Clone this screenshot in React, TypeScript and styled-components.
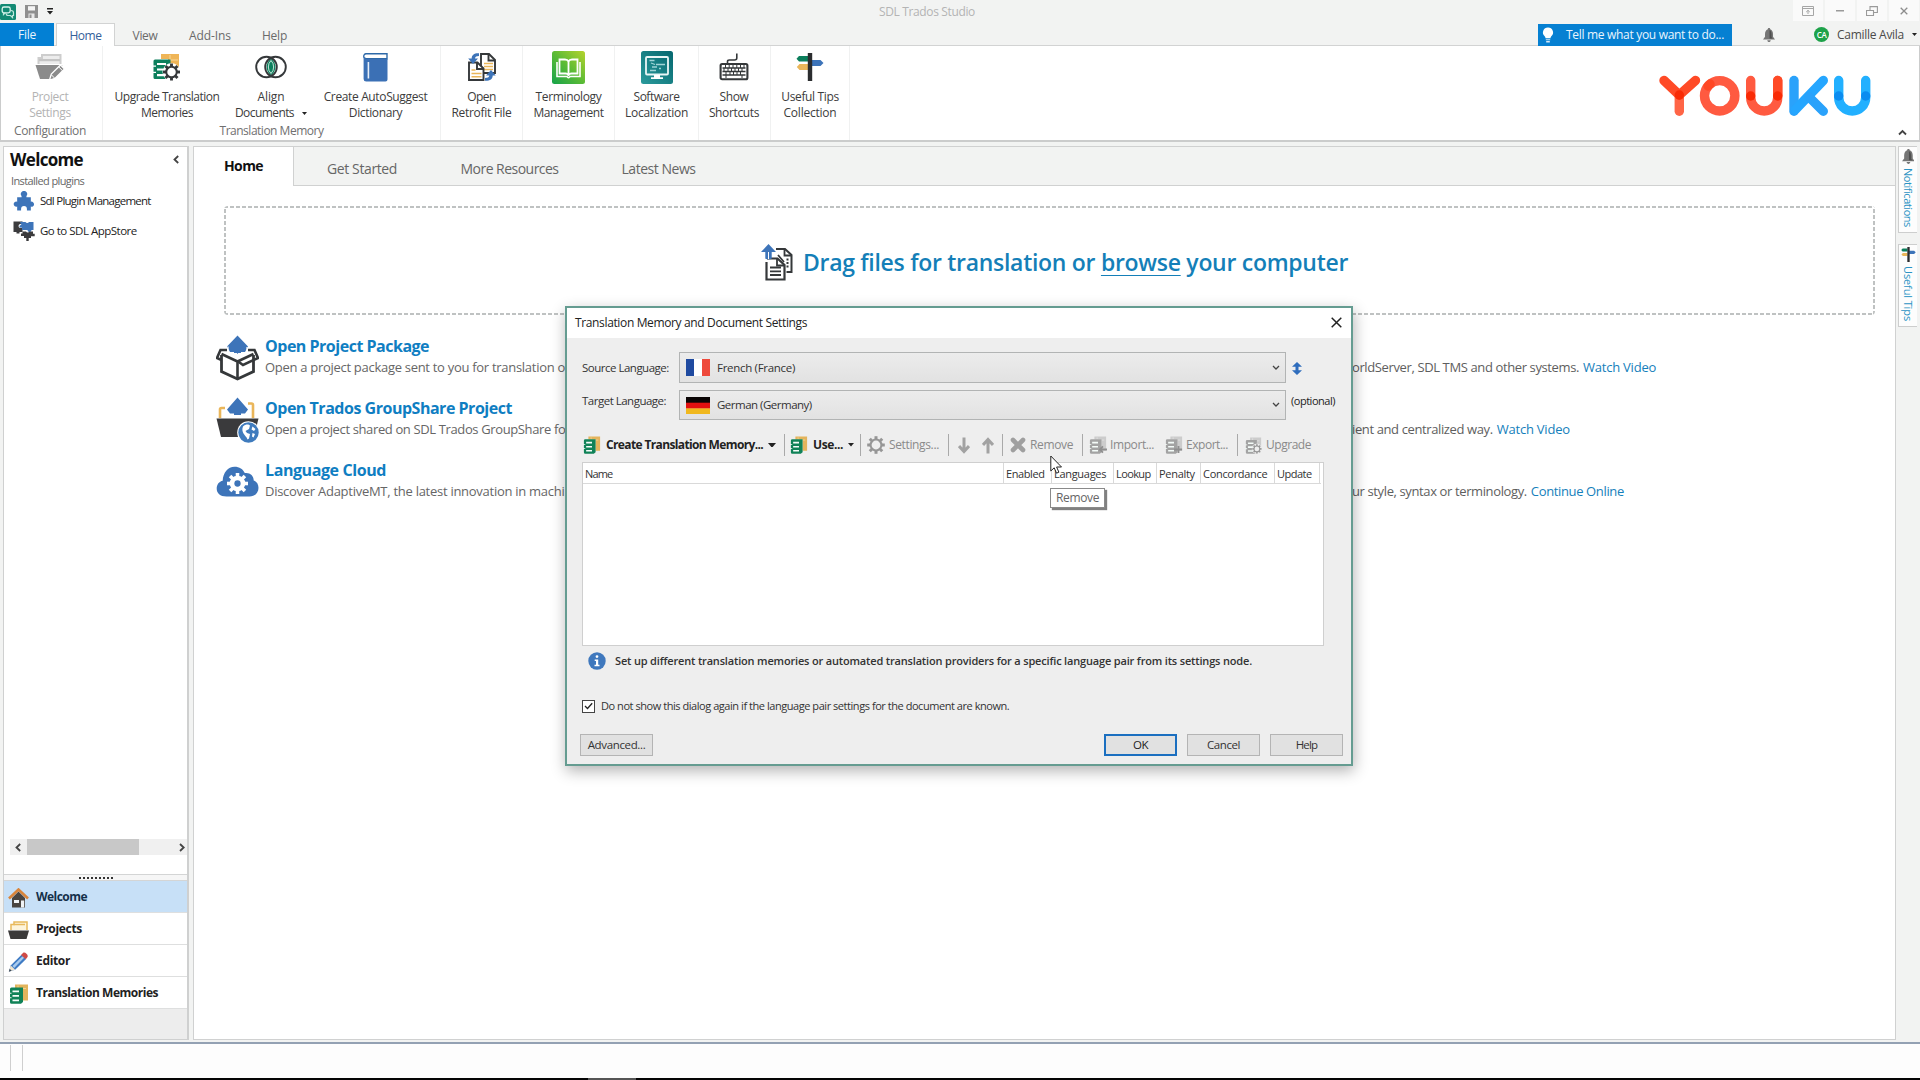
import React from 'react';
import styled, { createGlobalStyle, css } from 'styled-components';

const Global = createGlobalStyle`
  *, *::before, *::after { box-sizing: border-box; }
  html, body { margin: 0; padding: 0; background: #f2f3f2; }
  body { width: 1920px; height: 1080px; overflow: hidden; font-family: "Open Sans", "Noto Sans", sans-serif; font-size: 12px; color: #333; }
  svg { display: block; flex: none; }
`;

/* ---------- text ---------- */
const T = styled.span<{ $s?: number; $ls?: number; $w?: number; $c?: string; $lh?: number }>`
  font-size: ${p => p.$s ?? 12}px;
  letter-spacing: ${p => p.$ls ?? -0.36}px;
  font-weight: ${p => p.$w ?? 400};
  color: ${p => p.$c ?? '#3c3c3c'};
  line-height: ${p => p.$lh ?? 16}px;
  white-space: nowrap;
`;

/* ---------- frame ---------- */
const Screen = styled.div`
  position: relative;
  width: 1920px;
  height: 1080px;
  display: flex;
  flex-direction: column;
  background: #f2f3f2;
  overflow: hidden;
`;
const TitleBar = styled.header`
  display: grid;
  grid-template-columns: 840px 1fr 840px;
  height: 23px;
  flex: none;
`;
const QuickAccess = styled.div`
  display: flex;
  align-items: center;
  gap: 9px;
`;
const AppTitle = styled.div`
  display: flex;
  align-items: center;
  padding-left: 39px;
`;
const WindowButtons = styled.div`
  display: flex;
  justify-content: flex-end;
  gap: 2px;
  padding-right: 1px;
`;
const WindowButton = styled.div`
  width: 30px;
  height: 21px;
  display: flex;
  align-items: center;
  justify-content: center;
  background: #fafafa;
`;
const TabRow = styled.nav`
  display: flex;
  align-items: stretch;
  height: 23px;
  flex: none;
  box-shadow: inset 0 -1px #d2d3d3;
`;
const FileTab = styled.div`
  width: 54px;
  display: flex;
  align-items: center;
  justify-content: center;
  background: #0380d4;
`;
const RibbonTab = styled.div<{ $w: number; $active?: boolean }>`
  width: ${p => p.$w}px;
  display: flex;
  align-items: center;
  justify-content: center;
  padding-top: 2px;
  ${p => p.$active && css`
    margin-left: 2px;
    background: #fff;
    border: 1px solid #d2d3d3;
    border-bottom: 0;
  `}
`;
const TabRight = styled.div`
  margin-left: auto;
  display: flex;
  align-items: center;
`;
const TellMe = styled.div`
  width: 194px;
  height: 22px;
  margin-right: 31px;
  padding-left: 4px;
  display: flex;
  align-items: center;
  gap: 12px;
  background: #0680d2;
`;
const Avatar = styled.div`
  width: 15px;
  height: 15px;
  margin: 0 8px 0 39px;
  border-radius: 50%;
  background: #1ea24a;
  display: flex;
  align-items: center;
  justify-content: center;
`;
const UserMenu = styled.div`
  display: flex;
  align-items: center;
  gap: 8px;
  padding-right: 3px;
`;

/* ---------- ribbon ---------- */
const Ribbon = styled.section`
  position: relative;
  display: flex;
  height: 96px;
  flex: none;
  background: #fff;
  border: solid #cbcccc;
  border-width: 0 1px 2px 1px;
`;
const Group = styled.div<{ $w: number; $pr?: number }>`
  width: ${p => p.$w}px;
  display: flex;
  flex-direction: column;
  align-items: center;
  padding: 4px ${p => p.$pr ?? 0}px 0 0;
  border-right: 1px solid #f0f1f1;
`;
const GroupButtons = styled.div`
  display: flex;
  justify-content: center;
`;
const BigButton = styled.div<{ $w: number }>`
  width: ${p => p.$w}px;
  display: flex;
  flex-direction: column;
  align-items: center;
`;
const IconSlot = styled.div`
  height: 34px;
  margin-bottom: 5px;
  display: flex;
  align-items: center;
`;
const LabelLine = styled.div`
  display: flex;
  align-items: center;
  gap: 8px;
  height: 16px;
`;
const Caption = styled.div`
  height: 16px;
  margin-top: 2px;
  display: flex;
  align-items: center;
`;
const Watermark = styled.div`
  position: absolute;
  left: 1656px;
  top: 27px;
`;
const Collapse = styled.div`
  position: absolute;
  right: 12px;
  bottom: 4px;
`;

/* ---------- workspace ---------- */
const Workspace = styled.div`
  display: flex;
  height: 900px;
  padding: 4px 0 2px 3px;
  flex: none;
`;
const Sidebar = styled.aside`
  width: 186px;
  display: flex;
  flex-direction: column;
  background: #fff;
  border: 1px solid #cfd0d0;
  border-width: 1px 2px 1px 1px;
`;
const SideHead = styled.div`
  display: flex;
  align-items: center;
  justify-content: space-between;
  height: 25px;
  padding: 0 8px 0 6px;
`;
const SideCaption = styled.div`
  height: 18px;
  padding-left: 7px;
  display: flex;
  align-items: center;
`;
const PluginRow = styled.div`
  height: 22px;
  margin-bottom: 8px;
  padding-left: 9px;
  display: flex;
  align-items: center;
  gap: 5px;
`;
const HScroll = styled.div`
  display: flex;
  align-items: center;
  justify-content: space-between;
  height: 16px;
  margin: auto 0 19px 6px;
  padding: 0 2px 0 5px;
  background: #f0f0f0;
`;
const Thumb = styled.div`
  width: 112px;
  height: 16px;
  margin: 0 auto 0 6px;
  background: #c8c8c8;
`;
const Splitter = styled.div`
  height: 7px;
  border: 1px solid #d4d5d5;
  border-width: 1px 0;
  background: #f6f6f6;
  display: flex;
  justify-content: center;
  align-items: center;
  gap: 2px;
`;
const Dot = styled.i`
  width: 2px;
  height: 2px;
  background: #333;
`;
const NavItem = styled.div<{ $active?: boolean }>`
  height: 32px;
  padding-left: 4px;
  display: flex;
  align-items: center;
  gap: 7px;
  background: ${p => (p.$active ? '#c7e0f7' : '#fff')};
  border-bottom: 1px solid #dedfdf;
`;
const NavIcon = styled.div`
  width: 21px;
  display: flex;
  justify-content: center;
  padding-top: 3px;
`;
const NavFoot = styled.div`
  height: 30px;
  background: #ededed;
`;
const Main = styled.main`
  width: 1703px;
  margin-left: 4px;
  display: flex;
  flex-direction: column;
  background: #fff;
  border: 1px solid #d0d1d1;
`;
const PageTabs = styled.div`
  display: flex;
  height: 39px;
  flex: none;
`;
const PageTab = styled.div<{ $w: number; $active?: boolean }>`
  width: ${p => p.$w}px;
  display: flex;
  align-items: center;
  justify-content: center;
  padding: ${p => (p.$active ? '0 0 2px' : '6px 0 0')};
  background: ${p => (p.$active ? '#fff' : '#f2f3f2')};
  border-right: ${p => (p.$active ? '1px solid #d0d1d1' : '0')};
  border-bottom: ${p => (p.$active ? '0' : '1px solid #d0d1d1')};
`;
const TabFill = styled.div`
  flex: 1;
  background: #f2f3f2;
  border-bottom: 1px solid #d0d1d1;
`;
const DropZone = styled.div`
  height: 109px;
  margin: 20px 20px 0 30px;
  flex: none;
  display: flex;
  align-items: center;
  justify-content: center;
  gap: 9px;
  padding: 3px 0 0 10px;
  border-radius: 4px;
  background:
    repeating-linear-gradient(90deg, #bfc2c2 0 4px, transparent 4px 6px) 0 0 / 100% 2px no-repeat,
    repeating-linear-gradient(90deg, #bfc2c2 0 4px, transparent 4px 6px) 0 100% / 100% 2px no-repeat,
    repeating-linear-gradient(0deg, #bfc2c2 0 4px, transparent 4px 6px) 0 0 / 2px 100% no-repeat,
    repeating-linear-gradient(0deg, #bfc2c2 0 4px, transparent 4px 6px) 100% 0 / 2px 100% no-repeat;
`;
const Browse = styled.u`
  text-decoration-thickness: 1px;
  text-underline-offset: 4px;
`;
const Offers = styled.div`
  display: flex;
  flex-direction: column;
  padding: 20px 0 0 21px;
`;
const Offer = styled.div`
  display: grid;
  grid-template-columns: 50px 1087px 1fr;
  height: 62px;
`;
const OfferText = styled.div`
  display: flex;
  flex-direction: column;
`;
const OfferMore = styled.div`
  padding-top: 22px;
  display: flex;
  gap: 4px;
`;
const OfferIcon = styled.div<{ $pt?: number }>`
  padding: ${p => p.$pt ?? 0}px 0 0 1px;
`;
const Rail = styled.div`
  display: flex;
  flex-direction: column;
  gap: 11px;
  padding-left: 2px;
`;
const RailTab = styled.div<{ $h: number }>`
  width: 19px;
  height: ${p => p.$h}px;
  padding-top: 2px;
  display: flex;
  flex-direction: column;
  align-items: center;
  gap: 4px;
  background: #fdfdfd;
  border: 1px solid #cdcece;
  border-right: 0;
`;
const Vertical = styled(T)`
  writing-mode: vertical-rl;
`;
const StatusBar = styled.footer`
  height: 36px;
  display: flex;
  gap: 11px;
  padding: 1px 0 0 10px;
  background: #fdfdfd;
  border-top: 2px solid #93a1b3;
`;
const Notch = styled.i`
  width: 1px;
  height: 26px;
  background: #cfcfcf;
`;
const ScreenEdge = styled.div`
  height: 2px;
  background: linear-gradient(90deg, #050505 588px, #555 588px 636px, #050505 636px);
`;

/* ---------- dialog ---------- */
const Dialog = styled.div`
  position: absolute;
  left: 565px;
  top: 306px;
  width: 788px;
  height: 460px;
  display: flex;
  flex-direction: column;
  background: #eeeeee;
  border: 2px solid #659c91;
  box-shadow: 1px 5px 14px rgba(0, 0, 0, 0.3);
`;
const DialogTitle = styled.div`
  height: 30px;
  flex: none;
  padding: 0 9px 0 8px;
  display: flex;
  align-items: center;
  justify-content: space-between;
  background: #fff;
  & > svg { margin-bottom: 2px; }
`;
const DialogBody = styled.div`
  display: flex;
  flex-direction: column;
  padding: 14px 8px 0 15px;
`;
const FormRow = styled.div<{ $h: number; $mt?: number }>`
  display: grid;
  grid-template-columns: 97px 607px 1fr;
  height: ${p => p.$h}px;
  margin-top: ${p => p.$mt ?? 0}px;
`;
const FormLabel = styled.div<{ $pb?: number; $pl?: number; $pt?: number }>`
  display: flex;
  align-items: center;
  padding: ${p => p.$pt ?? 0}px 0 ${p => p.$pb ?? 0}px ${p => p.$pl ?? 0}px;
`;
const Combo = styled.div`
  display: flex;
  align-items: center;
  gap: 7px;
  padding: 0 5px 0 6px;
  background: linear-gradient(#ececec, #e2e2e2);
  border: 1px solid #b2b4b4;
  & > svg:last-child { margin-left: auto; }
`;
const ToolBar = styled.div`
  display: flex;
  height: 22px;
  margin-top: 14px;
  padding-left: 1px;
`;
const Tool = styled.div<{ $w: number; $pl?: number; $gap?: number; $sep?: boolean }>`
  width: ${p => p.$w}px;
  padding-left: ${p => p.$pl ?? 7}px;
  display: flex;
  align-items: center;
  gap: ${p => p.$gap ?? 5}px;
  border-right: ${p => (p.$sep ? '1px solid #a9a9a9' : '0')};
`;
const Table = styled.div`
  width: 742px;
  height: 184px;
  margin-top: 6px;
  background: #fff;
  border: 1px solid #cfcfcf;
`;
const HeadRow = styled.div`
  display: flex;
  height: 21px;
  width: 738px;
  border-bottom: 1px solid #d9d9d9;
`;
const HeadCell = styled.div<{ $w: number }>`
  width: ${p => p.$w}px;
  padding: 1px 0 0 2px;
  display: flex;
  align-items: center;
  border-right: 1px solid #d9d9d9;
`;
const InfoRow = styled.div`
  height: 18px;
  margin-top: 6px;
  padding-left: 6px;
  display: flex;
  align-items: center;
  gap: 9px;
`;
const CheckRow = styled.div`
  height: 16px;
  margin-top: 28px;
  display: flex;
  align-items: center;
  gap: 6px;
`;
const CheckBox = styled.div`
  width: 13px;
  height: 13px;
  display: flex;
  align-items: center;
  justify-content: center;
  background: #fff;
  border: 1px solid #444;
`;
const ButtonRow = styled.div`
  display: flex;
  gap: 10px;
  margin: 20px 0 0 -2px;
`;
const Button = styled.div<{ $w: number; $primary?: boolean; $push?: boolean }>`
  width: ${p => p.$w}px;
  height: 22px;
  display: flex;
  align-items: center;
  justify-content: center;
  background: #e1e1e1;
  border: ${p => (p.$primary ? '2px solid #1b6fc0' : '1px solid #b4b4b4')};
  margin-left: ${p => (p.$push ? 'auto' : '0')};
`;
const Tooltip = styled.div`
  position: absolute;
  left: 1050px;
  top: 488px;
  width: 55px;
  height: 20px;
  display: flex;
  align-items: center;
  justify-content: center;
  background: #fff;
  border: 1px solid #8a8a8a;
  box-shadow: 2px 2px 1px rgba(60, 60, 60, 0.65);
`;
const Pointer = styled.div`
  position: absolute;
  left: 1050px;
  top: 455px;
`;

/* ---------- icons ---------- */
const DARK = '#35383a';
const BLUE = '#3d74b9';
const GREEN = '#0c7f5c';
const GOLD = '#eab65a';

const Caret = ({ w = 6, c = '#222' }: { w?: number; c?: string }) => (
  <svg width={w} height={w * 0.6} viewBox="0 0 10 6"><path d="M0 0h10L5 6z" fill={c} /></svg>
);
const AppLogo = () => (
  <svg width="16" height="16" viewBox="0 0 16 16">
    <rect width="16" height="16" rx="1.5" fill="#138a74" />
    <rect x="2.200" y="3" width="8" height="5.800" rx="1.800" fill="none" stroke="#d9f4ec" strokeWidth="1.300" />
    <path d="M3.500 8.500v2l2-2M11 6.500c1.500 0 2.500.6 2.500 2.200v2.800h-1v2l-2-2H8c-1.200 0-1.700-.8-1.700-2" fill="none" stroke="#bfe8dc" strokeWidth="1.200" />
  </svg>
);
const SaveIcon = () => (
  <svg width="13" height="13" viewBox="0 0 13 13">
    <path d="M0 0h13v13H0z" fill="#8f8f8f" />
    <path d="M3 1.200h7v4.300H3z" fill="#f4f4f4" /><path d="M3.500 8.500h6V13h-6z" fill="#e8e8e8" /><path d="M4.500 9.500h2V13h-2z" fill="#8f8f8f" />
  </svg>
);
const MoreIcon = () => (
  <svg width="6" height="7" viewBox="0 0 6 7"><path d="M0 0h6v1.500H0zM0 3h6L3 6.500z" fill="#222" /></svg>
);
const RestoreRibbon = () => (
  <svg width="12" height="10" viewBox="0 0 12 10" fill="none" stroke="#a6a6a6" strokeWidth="1">
    <path d="M.5.5h11v9H.5zM.5 2.500h11M6 8V4.500M4.200 6L6 4.300 7.800 6" />
  </svg>
);
const MinIcon = () => <svg width="8" height="2" viewBox="0 0 8 2"><path d="M0 0h8v1.500H0z" fill="#9a9a9a" /></svg>;
const RestoreIcon = () => (
  <svg width="12" height="10" viewBox="0 0 12 10" fill="none" stroke="#9a9a9a" strokeWidth="1.100">
    <path d="M.5 4.500h7v5h-7zM4 4.500V.6h7.400V6.500H7.500" />
  </svg>
);
const CloseIcon = ({ s = 8, c = '#8d8d8d', w = 1.300 }: { s?: number; c?: string; w?: number }) => (
  <svg width={s} height={s} viewBox={`0 0 ${s} ${s}`}>
    <path d={`M.7.7L${s - 0.7} ${s - 0.7}M${s - 0.7} .7L.7 ${s - 0.7}`} stroke={c} strokeWidth={w} />
  </svg>
);
const RemoveIcon = () => (
  <svg width="16" height="16" viewBox="0 0 16 16">
    <path d="M3 3l10 10M13 3L3 13" stroke="#9f9f9f" strokeWidth="4.600" strokeLinecap="round" />
  </svg>
);
const BulbIcon = () => (
  <svg width="12" height="16" viewBox="0 0 12 16">
    <path d="M6 .5a5 5 0 0 1 3.300 8.800c-.6.6-.8 1.200-.8 2H3.500c0-.8-.2-1.400-.8-2A5 5 0 0 1 6 .5z" fill="#fff" />
    <path d="M3.800 12.300h4.400v1H3.800zM4.200 14h3.600v1.500H4.200z" fill="#d8e9f7" />
  </svg>
);
const BellIcon = ({ s = 14 }: { s?: number }) => (
  <svg width={s * 0.86} height={s} viewBox="0 0 12 14">
    <path d="M6 0c.8 0 1.200.5 1.200 1.200C9.200 1.900 10 4 10 6v2.800L12 11.500H0L2 8.800V6c0-2 .8-4.100 2.800-4.800C4.800.5 5.200 0 6 0z" fill="#757575" />
    <path d="M4.300 12.200h3.400c0 1-.8 1.800-1.700 1.800s-1.700-.8-1.700-1.800z" fill="#757575" />
    <path d="M6.500 2c1.800.7 2 3 2 5v2l1 1.500h-3z" fill="#4f4f4f" />
  </svg>
);
const Chevron = ({ d, w, h, c = '#444', sw = 1.800 }: { d: string; w: number; h: number; c?: string; sw?: number }) => (
  <svg width={w} height={h} viewBox={`0 0 ${w} ${h}`}><path d={d} fill="none" stroke={c} strokeWidth={sw} /></svg>
);
const LEFT = 'M5.200 1L1.500 4.500 5.200 8';
const RIGHT = 'M1 1l3.700 3.500L1 8';

const ProjectSettingsIcon = () => (
  <svg width="30" height="28" viewBox="0 0 30 28">
    <path d="M3.500 11V5H7V2h18.500v9" fill="#ececec" stroke="#cdcdcd" strokeWidth="2" />
    <path d="M4 6h21v2.200H4z" fill="#c4c4c4" />
    <path d="M.5 12h27l-2.500 4-8 10H5z" fill="#8b8b8b" />
    <path d="M14.500 27l1.800-6L25.500 12l4 4-9.300 9.300z" fill="#8b8b8b" stroke="#fff" strokeWidth="1.300" />
    <path d="M23.800 14l3.700 3.700M16.500 22l3 3" stroke="#fff" />
  </svg>
);
const Cog = ({ x, y, r, c, hole = '#fff', ring = 0.5 }: { x: number; y: number; r: number; c: string; hole?: string; ring?: number }) => (
  <g transform={`translate(${x} ${y})`}>
    {[0, 45, 90, 135].map(a => (
      <rect key={a} x={-r * 0.17} y={-r} width={r * 0.34} height={r * 2} fill={c} transform={`rotate(${a})`} />
    ))}
    <circle r={r * 0.74} fill={c} /><circle r={r * ring} fill={hole} />
  </g>
);
const UpgradeIcon = () => (
  <svg width="28" height="28" viewBox="0 0 28 28">
    <path d="M8 1h18v17H15V6H8z" fill="#efb557" /><path d="M17 2v5h8" fill="none" stroke="#f8d79b" />
    <path d="M2 6.500h15.500v17.500l-3 2H2a1.500 1.500 0 0 1-1.500-1.500V8A1.500 1.500 0 0 1 2 6.500z" fill={GREEN} />
    <path d="M4 10h9v2H4zM4 15.500h6v2H4zM4 21h7v2.200H4zM0 12.500h3v1.300H0zM0 18.700h3V20H0z" fill="#fff" />
    <circle cx="18.500" cy="19" r="9" fill="#fff" />
    <Cog x={18.500} y={19} r={8.500} c={DARK} />
  </svg>
);
const AlignIcon = () => (
  <svg width="32" height="24" viewBox="0 0 32 24">
    <path d="M16 3.800a9.800 9.800 0 0 1 0 16.400 9.800 9.800 0 0 1 0-16.400z" fill={GREEN} />
    <g fill="none" stroke={DARK} strokeWidth="1.900"><circle cx="11.500" cy="12" r="10.300" /><circle cx="20.500" cy="12" r="10.300" /></g>
    <path d="M16 5.500a9.300 9.300 0 0 1 0 13 9.300 9.300 0 0 1 0-13z" fill="none" stroke="#d8efe6" strokeWidth=".9" />
  </svg>
);
const BookIcon = () => (
  <svg width="25" height="29" viewBox="0 0 25 29">
    <path d="M3 .7h21v5H3.500a2.300 2.300 0 0 1-.5-5z" fill="#fff" stroke="#2d69a8" strokeWidth="1.400" />
    <path d="M.6 3.500A3 3 0 0 0 3.500 6H24.500v20.500a2 2 0 0 1-2 2H3.200A2.600 2.600 0 0 1 .6 26z" fill="#3b70b5" />
    <path d="M4.600 9h1.600v16.500H4.600z" fill="#e6eef8" />
  </svg>
);
const RetrofitIcon = () => (
  <svg width="30" height="30" viewBox="0 0 30 30">
    <path d="M14 2h8l6 6v13H14z" fill="#fff" stroke={DARK} strokeWidth="1.900" />
    <path d="M21.500 2v6.500H28" fill="none" stroke={DARK} strokeWidth="1.900" />
    <path d="M17 11.500h9M17 14.500h9M17 17.500h9" stroke={GOLD} strokeWidth="1.300" />
    <path d="M2 10.500h8.500l6 6V28H2z" fill="#fff" stroke={DARK} strokeWidth="1.900" />
    <path d="M10 10.500V17h6.500" fill="none" stroke={DARK} strokeWidth="1.900" />
    <path d="M4.500 18h4M4.500 21.500h10M4.500 24.800h10" stroke={GOLD} strokeWidth="1.400" />
    <path d="M12 1.200C7 1 4.700 3 4.700 6.500H1.200L6 12l5-5.500H8C8 4.800 9.500 4 12 4z" fill={BLUE} />
    <path d="M18 28.800c5 .2 7.700-1.800 7.700-5.300h3L24 18l-5 5.500h3.300c0 1.700-1.800 2.500-4.300 2.500z" fill={BLUE} />
  </svg>
);
const TermIcon = () => (
  <svg width="33" height="33" viewBox="0 0 33 33">
    <defs><linearGradient id="term" x1="1" y1="0" x2="0" y2="1"><stop offset="0" stopColor="#b5d32c" /><stop offset=".5" stopColor="#5cbb35" /><stop offset="1" stopColor="#16a34a" /></linearGradient></defs>
    <rect width="33" height="33" rx="2.500" fill="url(#term)" />
    <path d="M16.500 10.500v14.500M16.500 10.500C15.800 9 14.500 8.500 13 8.500H7.500v14h6c1.700 0 2.700.6 3 2 .3-1.400 1.300-2 3-2h6v-14H20c-1.500 0-2.800.5-3.500 2z" fill="none" stroke="#fff" strokeWidth="1.800" />
    <path d="M5 11v14.500h9.500c1 0 1 1.200 2 1.200s1-1.200 2-1.200H28V11" fill="none" stroke="#fff" strokeWidth="1.600" />
  </svg>
);
const LocalIcon = () => (
  <svg width="32" height="33" viewBox="0 0 32 33">
    <defs><linearGradient id="loc" x1="1" y1="0" x2="0" y2="1"><stop offset="0" stopColor="#06676f" /><stop offset="1" stopColor="#2a9a9b" /></linearGradient></defs>
    <rect width="32" height="33" rx="2.500" fill="url(#loc)" />
    <rect x="5" y="6" width="22" height="17.500" rx="1" fill="none" stroke="#e9f6f6" strokeWidth="1.800" />
    <path d="M8.500 9.500h5M10 12l4 1.500M15 13.500h9M11 16h5M18 17.500h2M9 19.500h6" stroke="#9fd4d6" strokeWidth="1.300" />
    <path d="M13 24h6v2.300h3V28H10v-1.700h3z" fill="#fff" />
  </svg>
);
const KeyboardIcon = () => (
  <svg width="30" height="28" viewBox="0 0 30 28">
    <path d="M8.500 10V8.500c0-1 .7-1.500 1.800-1.500h5.200c1.500 0 2.300-.7 2.300-2V.5" fill="none" stroke={DARK} strokeWidth="1.600" />
    <rect x="1.600" y="11" width="26.800" height="15.300" rx="1.500" fill="#fff" stroke={DARK} strokeWidth="2.100" />
    <path d="M3.500 15h23M3.500 18.500h23M3.500 22h23" stroke={DARK} strokeWidth="1.300" />
    <path d="M6.500 12v3M10.200 12v3M14 12v3M17.800 12v3M21.500 12v3M25 12v3M5 15v3.500M9 15v3.500M12.500 15v3.500M16 15v3.500M19.500 15v3.500M23 15v3.500M7 18.500V22M11 18.500V22M14.500 18.500V22M18 18.500V22M21.500 18.500V22M7 22v3M23 22v3" stroke={DARK} strokeWidth="1" />
  </svg>
);
const SignIcon = ({ s = 28 }: { s?: number }) => (
  <svg width={s} height={s} viewBox="0 0 28 28">
    <path d="M3 3h9v5.500H3L.5 5.700z" fill={GREEN} /><path d="M3.500 11H12v6H3.500L.8 14z" fill={GOLD} />
    <path d="M15 7h9.500l3 3-3 3H15z" fill={BLUE} />
    <path d="M11.800 0h4.400v28h-4.400z" fill="#2b2d2f" />
  </svg>
);

const Youku = () => (
  <svg width="216" height="46" viewBox="1657 73 216 46" role="img" aria-label="Youku" fill="none" strokeLinecap="round" strokeWidth="9.400">
    <g stroke="#ff4a26">
      <line x1="1664" y1="80.500" x2="1679.300" y2="95" /><line x1="1695.500" y1="80.500" x2="1679.300" y2="95" />
      <line x1="1679.300" y1="95" x2="1679.300" y2="111.300" strokeOpacity=".85" />
      <circle cx="1719.700" cy="95.800" r="15.200" stroke="#ff5a40" />
      <line x1="1710" y1="84" x2="1708" y2="86" stroke="#ff3a12" strokeOpacity=".6" />
      <path d="M1750.700 80.500V97.500a13.500 13.500 0 0 0 27 0V80.500" stroke="#ff5a40" />
      <line x1="1777.700" y1="80.500" x2="1777.700" y2="95.500" />
    </g>
    <g fill="#f92b05" stroke="none"><circle cx="1679.300" cy="95" r="4.700" /><circle cx="1750.700" cy="96" r="4.700" /><circle cx="1777.700" cy="96" r="4.700" /></g>
    <g stroke="#2aa2fb">
      <line x1="1794" y1="80.500" x2="1794" y2="111.300" /><line x1="1823.300" y1="80.500" x2="1795.500" y2="109.500" stroke="#25a6ff" /><line x1="1809" y1="97" x2="1823.300" y2="111.300" />
      <path d="M1838.700 80.500V97.500a13.500 13.500 0 0 0 27 0V80.500" stroke="#22b0ff" />
    </g>
    <g fill="#0b8cf0" stroke="none"><circle cx="1838.700" cy="96" r="4.700" /><circle cx="1865.700" cy="96" r="4.700" /></g>
  </svg>
);

const PUZZLE = 'M8.500 5.200A3.200 3.200 0 1 1 13.500 5.200V6.500h4.500V11a2.600 2.600 0 1 1 0 5V20H14v-1.500a3 3 0 0 0-6 0V20H4v-4.200a2.600 2.600 0 1 1 0-4.800V6.500h4.500z';
const PuzzleIcon = () => (
  <svg width="22" height="20" viewBox="0 0 22 20.500"><path d={PUZZLE} fill={BLUE} /></svg>
);
const StoreIcon = () => (
  <svg width="22" height="20" viewBox="0 0 22 20">
    <path d="M.5.500h9v2.500h-2a2 2 0 0 0 0 4h2V11H6.500v1.500h-3V11h-3z" fill="#3b3b3d" />
    <path d="M7 1.500c1-1.500 3-.500 3-.5h2.500a2 2 0 0 0 3.500 0h4.500v8h-2a2 2 0 0 1-4 0H9V6.500C6 7.500 5.500 4 8.500 4z" fill={BLUE} />
    <path d="M9.500 10.500h3.500a2 2 0 0 0 3.500 0h3.500v2.200h1.700v2.600H18V17h-2.300v3h-2.400v-3H11v-2H8v-2.500h1.500z" fill="#3b3b3d" />
  </svg>
);
const HouseIcon = () => (
  <svg width="21" height="20" viewBox="0 0 21 20">
    <path d="M4 10l6.500-6.500L17 10v9.500H4z" fill="#4a4540" />
    <path d="M1 10.500L10.500 1.500 20 10.500" fill="none" stroke="#d9853b" strokeWidth="2.600" />
    <path d="M6 12h5v3H6zM13 12.500h3.200v7H13z" fill="#f1f4f6" />
  </svg>
);
const ProjectsIcon = () => (
  <svg width="21" height="20" viewBox="0 0 21 20">
    <path d="M3 10V4.500h3V2h13v8" fill="#fdf4dc" stroke="#e8b95c" strokeWidth="1.500" /><path d="M5.500 4.500H17" stroke="#e8b95c" strokeWidth="1.500" />
    <path d="M0 10.500h21l-2.500 8.500h-16z" fill="#3b3a3a" />
  </svg>
);
const PencilIcon = () => (
  <svg width="21" height="20" viewBox="0 0 21 20">
    <path d="M1 19.500l1.700-6L13.500 2.700l4.600 4.300L7.200 17.700z" fill="#3f7bc4" />
    <path d="M4.500 14L14.500 4.200l1.600 1.600L6.200 16z" fill="#a9caec" />
    <path d="M13 3l2.200-2.300c1.600-1.200 5.600 2 4.300 4.300L17.800 7.200z" fill="#cf4a45" /><path d="M1 19.500l1.700-6 4.500 4.200z" fill="#f0e4cf" /><path d="M.8 19.700l.9-3 2 2z" fill="#3c4a58" />
  </svg>
);
const TMIcon = ({ s = 18, grey, badge }: { s?: number; grey?: boolean; badge?: 'in' | 'out' | 'cog' }) => {
  const front = grey ? '#a3a3a3' : '#108257';
  return (
    <svg width={s} height={s} viewBox="0 0 20 20">
      <path d="M6 .5h13v16h-5V4H6z" fill={grey ? '#cccccc' : '#e3b45c'} /><path d="M9 1.500v3h8" fill="none" stroke={grey ? '#e5e5e5' : '#f3dba6'} strokeWidth=".8" />
      <path d="M2.500 3.500H14V18l-2 1.700H2.500A1.500 1.500 0 0 1 1 18.200V5a1.500 1.500 0 0 1 1.500-1.500z" fill={front} />
      <path d="M3.500 6.500h6.500v1.800H3.500zM3.500 11h6.500v1.800H3.500zM3.500 15.500h6.500v1.800H3.500zM0 8.800h2.500v1H0zM0 13.300h2.500v1H0z" fill="#f4fbf8" />
      {badge === 'in' && <path d="M20 15h-7M15.500 11.500L12 15l3.500 3.500" fill="none" stroke="#8f8f8f" strokeWidth="2" />}
      {badge === 'out' && <path d="M10 15h9M15 11v8" fill="none" stroke="#8f8f8f" strokeWidth="2" />}
      {badge === 'cog' && <><circle cx="14" cy="14" r="6" fill="#eee" /><Cog x={14} y={14} r={5.500} c="#989898" hole="#eee" /></>}
    </svg>
  );
};
const DragIcon = () => (
  <svg width="33" height="38" viewBox="0 0 33 38">
    <path d="M15 6h9l6.500 6v17h-5" fill="#fff" stroke={DARK} strokeWidth="2" /><path d="M23.500 6v6.500h7" fill="none" stroke={DARK} strokeWidth="1.800" />
    <path d="M6 15.500h10.500l7 6.500v14.500H5.500V19" fill="#fff" stroke={DARK} strokeWidth="2.200" /><path d="M16 15.500V22.500h7M17 12l6 7" fill="none" stroke={DARK} strokeWidth="1.800" />
    <path d="M9 24.500h11M9 28.300h11M9 32h11M25.500 16.500h2M25.500 20h2M25.500 23.500h2" stroke={DARK} strokeWidth="1.800" />
    <path d="M7.500 1L15 9h-4.300v6.500c0 1-6.400 1-6.400 0V9H0z" fill={BLUE} /><path d="M7.500 9v7" stroke="#fff" strokeWidth="1" />
  </svg>
);
const PackageIcon = () => (
  <svg width="43" height="46" viewBox="0 0 43 46">
    <path d="M5.500 20v16.500L21.500 44l16-7.500V20" fill="#fff" stroke={DARK} strokeWidth="2.800" />
    <path d="M5.500 19l16 7.500 16-7.500M21.500 26.500V44" fill="none" stroke={DARK} strokeWidth="2.600" />
    <path d="M11 15L4.500 15 1 23l4.500 2M32 15h6.500L42 23l-15 7-5.500-4" fill="none" stroke={DARK} strokeWidth="2.600" />
    <path d="M21.500.5L32 11.500 29 17h-4v-3l-3.500 5-3.500-5v3h-4l-3-5.500z" fill={BLUE} />
    <path d="M12 11.500v5.500l9.500 4.500L31 17v-5" fill="none" stroke="#fff" strokeWidth="1.200" />
    <path d="M18 13h7v5h-7z" fill={BLUE} />
  </svg>
);
const GroupShareIcon = () => (
  <svg width="43" height="47" viewBox="0 0 43 47">
    <path d="M4 21V12.500c0-1 .5-1.500 1.500-1.500H9M32 6.500h3.500c1 0 1.500.5 1.500 1.500v13" fill="none" stroke={GOLD} strokeWidth="2.600" />
    <path d="M21.500.5L32 12.500l-3 4h-4v-3l-3.500 4-3.500-4v3h-4l-3-4z" fill={BLUE} /><path d="M18 12h7v6h-7z" fill={BLUE} />
    <path d="M.5 21.500h42L38 40H5z" fill="#3a3a3c" />
    <circle cx="32.500" cy="35.500" r="11.300" fill="#fff" /><circle cx="32.500" cy="35.500" r="10.200" fill="#3f7bbd" />
    <path d="M27 29.500c3-3 6-2 7-1l-1 3.500-3.500 2 1.500 2 3 1-1 4.500-1.500 1c-1-3-3-4-4-6s-1.700-4-.5-7zM36.500 29.500l3 2.500-1.500 2-2.500-1.500zM36.500 36l2.500 1-1.500 3.500-1.500-1z" fill="#fff" />
  </svg>
);
const CloudIcon = () => (
  <svg width="43" height="31" viewBox="0 0 43 31">
    <path d="M10.500 30.500C4 30.500.7 27 .7 22.500c0-4 2.500-7 6-7.700C7 6.500 12 .7 18.500.7c5 0 8.500 2.300 10.300 6.300 5-.8 9 2.500 8.900 7.500 3 1 4.800 4 4.800 7.300 0 5-3.500 8.700-9 8.700z" fill={BLUE} />
    <Cog x={21.500} y={17.500} r={10.500} c="#fff" hole={BLUE} ring={0.3} />
  </svg>
);
const FranceFlag = () => (
  <svg width="24" height="17" viewBox="0 0 24 17"><path d="M0 0h8v17H0z" fill="#1f4aa0" /><path d="M8 0h8v17H8z" fill="#fff" /><path d="M16 0h8v17h-8z" fill="#ee4a3c" /></svg>
);
const GermanyFlag = () => (
  <svg width="24" height="17" viewBox="0 0 24 17"><path d="M0 0h24v6H0z" fill="#0a0505" /><path d="M0 5.700h24v6H0z" fill="#e01010" /><path d="M0 11.400h24V17H0z" fill="#f0b81e" /></svg>
);
const SwapIcon = () => (
  <svg width="10" height="13" viewBox="0 0 10 13"><path d="M5 0l5 4.700H6.500v3.600H10L5 13 0 8.300h3.500V4.700H0z" fill="#2f6dbd" /></svg>
);
const ArrowIcon = ({ up }: { up?: boolean }) => (
  <svg width="12" height="17" viewBox="0 0 12 17"><path d={up ? 'M6 16.500V3M1 8l5-5.500L11 8' : 'M6 .5V14M1 9l5 5.500L11 9'} fill="none" stroke="#a2a2a2" strokeWidth="3" /></svg>
);
const GearIcon = () => <svg width="18" height="18" viewBox="0 0 18 18"><Cog x={9} y={9} r={8.800} c="#969696" hole="#eeeeee" /></svg>;
const InfoIcon = () => (
  <svg width="18" height="18" viewBox="0 0 18 18"><circle cx="9" cy="9" r="8.700" fill="#3f78bd" /><path d="M9 3.200a1.400 1.400 0 1 1 0 2.800 1.400 1.400 0 0 1 0-2.800zM6.700 7.500h3.500v5.300h1.300v1.500h-5v-1.500H8V9H6.700z" fill="#fff" /></svg>
);
const CursorIcon = () => (
  <svg width="13" height="20" viewBox="0 0 13 20"><path d="M.8 1v15l3.400-3.200 2.300 5.400 2.400-1-2.300-5.200h4.900z" fill="#fff" stroke="#222" strokeWidth="1" /></svg>
);

/* ---------- composition ---------- */
const RibbonButton = ({ w, icon, a, b, c, caret, lsA = -0.36, lsB = -0.36 }: {
  w: number; icon: React.ReactNode; a: string; b: string; c?: string; caret?: boolean; lsA?: number; lsB?: number;
}) => (
  <BigButton $w={w}>
    <IconSlot>{icon}</IconSlot>
    <LabelLine><T $c={c} $ls={lsA}>{a}</T></LabelLine>
    <LabelLine><T $c={c} $ls={lsB}>{b}</T>{caret && <Caret w={5} />}</LabelLine>
  </BigButton>
);

const columns: [string, number, number][] = [
  ['Name', 421, -0.85], ['Enabled', 48, -0.4], ['Languages', 62, -0.3], ['Lookup', 43, -0.6],
  ['Penalty', 44, -0.3], ['Concordance', 74, -0.3], ['Update', 45, -0.5],
];

const offers = [
  { icon: <PackageIcon />, pt: 0, title: 'Open Project Package', tls: -0.49, left: 'Open a project package sent to you for translation o', lls: -0.29, right: 'orldServer, SDL TMS and other systems.', link: 'Watch Video', kls: -0.23 },
  { icon: <GroupShareIcon />, pt: 0, title: 'Open Trados GroupShare Project', tls: -0.48, left: 'Open a project shared on SDL Trados GroupShare fo', lls: -0.37, right: 'ient and centralized way.', link: 'Watch Video', kls: -0.23 },
  { icon: <CloudIcon />, pt: 7, title: 'Language Cloud', tls: -0.41, left: 'Discover AdaptiveMT, the latest innovation in machi', lls: -0.27, right: 'ur style, syntax or terminology.', link: 'Continue Online', kls: -0.36 },
];

export default function App() {
  return (
    <Screen>
      <Global />
      <TitleBar>
        <QuickAccess><AppLogo /><SaveIcon /><MoreIcon /></QuickAccess>
        <AppTitle><T $c="#b4b4b4">SDL Trados Studio</T></AppTitle>
        <WindowButtons>
          <WindowButton><RestoreRibbon /></WindowButton>
          <WindowButton><MinIcon /></WindowButton>
          <WindowButton><RestoreIcon /></WindowButton>
          <WindowButton><CloseIcon /></WindowButton>
        </WindowButtons>
      </TitleBar>
      <TabRow>
        <FileTab><T $c="#e8f4fd" $ls={-0.25}>File</T></FileTab>
        <RibbonTab $w={59} $active><T $c="#33609a" $ls={-0.48}>Home</T></RibbonTab>
        <RibbonTab $w={60}><T $c="#6a6a6a">View</T></RibbonTab>
        <RibbonTab $w={70}><T $c="#6a6a6a" $ls={-0.08}>Add-Ins</T></RibbonTab>
        <RibbonTab $w={59}><T $c="#6a6a6a" $ls={-0.24}>Help</T></RibbonTab>
        <TabRight>
          <TellMe><BulbIcon /><T $c="#eaf5fd" $ls={-0.31}>Tell me what you want to do...</T></TellMe>
          <BellIcon />
          <Avatar><T $s={8} $w={600} $c="#fff" $lh={10}>CA</T></Avatar>
          <UserMenu><T $c="#4a4a4a" $ls={-0.28}>Camille Avila</T><Caret w={5} /></UserMenu>
        </TabRight>
      </TabRow>
      <Ribbon>
        <Group $w={102} $pr={3}>
          <GroupButtons><RibbonButton w={90} icon={<ProjectSettingsIcon />} a="Project" b="Settings" c="#b3b3b3" /></GroupButtons>
          <Caption><T $c="#707070">Configuration</T></Caption>
        </Group>
        <Group $w={338}>
          <GroupButtons>
            <RibbonButton w={109} icon={<UpgradeIcon />} a="Upgrade Translation" b="Memories" lsA={-0.49} lsB={-0.53} />
            <RibbonButton w={99} icon={<AlignIcon />} a="Align" b="Documents" caret lsA={-0.1} lsB={-0.58} />
            <RibbonButton w={110} icon={<BookIcon />} a="Create AutoSuggest" b="Dictionary" />
          </GroupButtons>
          <Caption><T $c="#707070" $ls={-0.49}>Translation Memory</T></Caption>
        </Group>
        <Group $w={82}><RibbonButton w={80} icon={<RetrofitIcon />} a="Open" b="Retrofit File" lsA={-0.6} lsB={-0.31} /></Group>
        <Group $w={92}><RibbonButton w={80} icon={<TermIcon />} a="Terminology" b="Management" lsB={-0.42} /></Group>
        <Group $w={84}><RibbonButton w={80} icon={<LocalIcon />} a="Software" b="Localization" lsA={-0.47} lsB={-0.26} /></Group>
        <Group $w={72} $pr={1}><RibbonButton w={70} icon={<KeyboardIcon />} a="Show" b="Shortcuts" /></Group>
        <Group $w={79}><RibbonButton w={70} icon={<SignIcon />} a="Useful Tips" b="Collection" lsB={-0.22} /></Group>
        <Watermark><Youku /></Watermark>
        <Collapse><Chevron w={9} h={7} d="M1 5.500L4.500 2 8 5.500" /></Collapse>
      </Ribbon>

      <Workspace>
        <Sidebar>
          <SideHead>
            <T $s={17} $w={700} $ls={-0.67} $c="#111" $lh={24}>Welcome</T>
            <Chevron w={6} h={9} d={LEFT} />
          </SideHead>
          <SideCaption><T $s={11} $ls={-0.6} $c="#666">Installed plugins</T></SideCaption>
          <PluginRow><PuzzleIcon /><T $s={11.500} $ls={-0.75} $c="#222">Sdl Plugin Management</T></PluginRow>
          <PluginRow><StoreIcon /><T $s={11.500} $ls={-0.5} $c="#222">Go to SDL AppStore</T></PluginRow>
          <HScroll>
            <Chevron w={6} h={9} d={LEFT} />
            <Thumb />
            <Chevron w={6} h={9} d={RIGHT} />
          </HScroll>
          <Splitter>{Array.from({ length: 9 }, (_, i) => <Dot key={i} />)}</Splitter>
          <NavItem $active><NavIcon><HouseIcon /></NavIcon><T $w={700} $ls={-0.55} $c="#15304a">Welcome</T></NavItem>
          <NavItem><NavIcon><ProjectsIcon /></NavIcon><T $w={700} $ls={-0.31} $c="#222">Projects</T></NavItem>
          <NavItem><NavIcon><PencilIcon /></NavIcon><T $w={700} $ls={-0.34} $c="#222">Editor</T></NavItem>
          <NavItem><NavIcon><TMIcon s={20} /></NavIcon><T $w={700} $ls={-0.47} $c="#222">Translation Memories</T></NavItem>
          <NavFoot />
        </Sidebar>

        <Main>
          <PageTabs>
            <PageTab $w={100} $active><T $s={14} $w={700} $ls={-0.6} $c="#111" $lh={20}>Home</T></PageTab>
            <PageTab $w={136}><T $s={14} $ls={-0.39} $c="#666" $lh={20}>Get Started</T></PageTab>
            <PageTab $w={159}><T $s={14} $ls={-0.53} $c="#666" $lh={20}>More Resources</T></PageTab>
            <PageTab $w={139}><T $s={14} $ls={-0.47} $c="#666" $lh={20}>Latest News</T></PageTab>
            <TabFill />
          </PageTabs>
          <DropZone>
            <DragIcon />
            <T $s={23} $w={600} $ls={-0.29} $c="#147fb8" $lh={32}>Drag files for translation or <Browse>browse</Browse> your computer</T>
          </DropZone>
          <Offers>
            {offers.map(o => (
              <Offer key={o.title}>
                <OfferIcon $pt={o.pt}>{o.icon}</OfferIcon>
                <OfferText>
                  <T $s={16} $w={700} $ls={o.tls} $c="#0f7ec2" $lh={22}>{o.title}</T>
                  <T $s={13} $ls={o.lls} $c="#666" $lh={20}>{o.left}</T>
                </OfferText>
                <OfferMore>
                  <T $s={13} $ls={-0.38} $c="#5e5e5e" $lh={20}>{o.right}</T>
                  <T $s={13} $ls={o.kls} $c="#1580bb" $lh={20}>{o.link}</T>
                </OfferMore>
              </Offer>
            ))}
          </Offers>
        </Main>

        <Rail>
          <RailTab $h={87}><BellIcon s={15} /><Vertical $s={11} $c="#2b93c4" $ls={-0.45}>Notifications</Vertical></RailTab>
          <RailTab $h={83}><SignIcon s={15} /><Vertical $s={11} $c="#2b93c4" $ls={-0.12}>Useful Tips</Vertical></RailTab>
        </Rail>
      </Workspace>

      <StatusBar><Notch /><Notch /></StatusBar>
      <ScreenEdge />

      <Dialog>
        <DialogTitle>
          <T $c="#222">Translation Memory and Document Settings</T>
          <CloseIcon s={11} c="#222" w={1.500} />
        </DialogTitle>
        <DialogBody>
          <FormRow $h={31}>
            <FormLabel $pt={1}><T $s={11.500} $ls={-0.5} $c="#333">Source Language:</T></FormLabel>
            <Combo><FranceFlag /><T $s={11.500} $ls={-0.3} $c="#333">French (France)</T><Chevron w={8} h={6} d="M1 1l3 3 3-3" sw={1.300} /></Combo>
            <FormLabel $pl={6} $pt={2}><SwapIcon /></FormLabel>
          </FormRow>
          <FormRow $h={30} $mt={7}>
            <FormLabel $pb={8}><T $s={11.500} $ls={-0.5} $c="#333">Target Language:</T></FormLabel>
            <Combo><GermanyFlag /><T $s={11.500} $ls={-0.5} $c="#333">German (Germany)</T><Chevron w={8} h={6} d="M1 1l3 3 3-3" sw={1.300} /></Combo>
            <FormLabel $pb={8} $pl={5}><T $s={11} $ls={-0.48} $c="#222">(optional)</T></FormLabel>
          </FormRow>
          <ToolBar>
            <Tool $w={202} $pl={0} $sep><TMIcon /><T $w={700} $ls={-0.63} $c="#222">Create Translation Memory...</T><Caret w={8} /></Tool>
            <Tool $w={76} $pl={5} $sep><TMIcon /><T $w={700} $ls={-0.4} $c="#222">Use...</T><Caret w={6} /></Tool>
            <Tool $w={88} $pl={6} $gap={4} $sep><GearIcon /><T $c="#8a8a8a">Settings...</T></Tool>
            <Tool $w={54} $pl={9} $gap={12} $sep><ArrowIcon /><ArrowIcon up /></Tool>
            <Tool $w={80} $pl={7} $gap={4} $sep><RemoveIcon /><T $c="#8a8a8a">Remove</T></Tool>
            <Tool $w={76} $pl={6} $gap={3}><TMIcon grey badge="in" /><T $c="#8a8a8a" $ls={-0.41}>Import...</T></Tool>
            <Tool $w={79} $pl={6} $gap={3} $sep><TMIcon grey badge="out" /><T $c="#8a8a8a" $ls={-0.46}>Export...</T></Tool>
            <Tool $w={80} $gap={4}><TMIcon s={17} grey badge="cog" /><T $c="#8a8a8a" $ls={-0.47}>Upgrade</T></Tool>
          </ToolBar>
          <Table>
            <HeadRow>
              {columns.map(([name, w, ls]) => (
                <HeadCell key={name} $w={w}><T $s={11} $ls={ls} $c="#333">{name}</T></HeadCell>
              ))}
            </HeadRow>
          </Table>
          <InfoRow>
            <InfoIcon />
            <T $s={11} $w={600} $ls={-0.17} $c="#333">Set up different translation memories or automated translation providers for a specific language pair from its settings node.</T>
          </InfoRow>
          <CheckRow>
            <CheckBox><Chevron w={9} h={8} d="M1 4l2.500 2.500L8.200 1.200" c="#222" sw={1.300} /></CheckBox>
            <T $s={11} $ls={-0.45} $c="#333">Do not show this dialog again if the language pair settings for the document are known.</T>
          </CheckRow>
          <ButtonRow>
            <Button $w={73}><T $s={11.500} $ls={-0.35} $c="#333">Advanced...</T></Button>
            <Button $w={73} $primary $push><T $s={11.500} $ls={-0.6} $c="#222">OK</T></Button>
            <Button $w={73}><T $s={11.500} $ls={-0.45} $c="#333">Cancel</T></Button>
            <Button $w={73}><T $s={11.500} $ls={-0.8} $c="#333">Help</T></Button>
          </ButtonRow>
        </DialogBody>
      </Dialog>
      <Tooltip><T $c="#666">Remove</T></Tooltip>
      <Pointer><CursorIcon /></Pointer>
    </Screen>
  );
}
